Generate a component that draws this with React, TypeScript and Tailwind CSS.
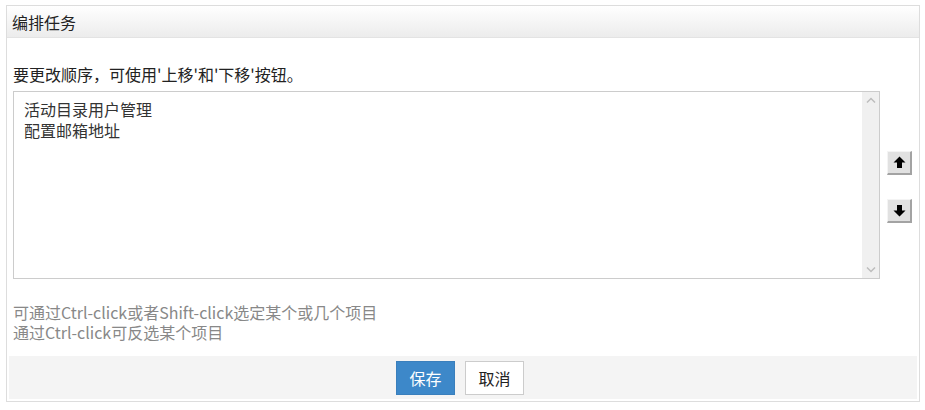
import React from "react";

const font = { fontFamily: '"Noto Sans CJK SC", "Liberation Sans", sans-serif' };

function ArrowButton({ dir }: { dir: "up" | "down" }) {
  return (
    <button className="w-[25px] h-[24px] flex items-center justify-center bg-[#e1e1e1] border border-t-[#f4f4f4] border-l-[#f4f4f4] border-r-2 border-b-2 border-r-[#a3a3a3] border-b-[#a3a3a3]">
      <svg width="13" height="13" viewBox="0 0 13 13" className={dir === "down" ? "rotate-180" : ""}>
        <path d="M6.5 0.5 L12.5 6.5 L9 6.5 L9 12 L4 12 L4 6.5 L0.5 6.5 Z" fill="#000" />
      </svg>
    </button>
  );
}

export default function App() {
  const tasks = ["活动目录用户管理", "配置邮箱地址"];

  return (
    <div className="w-[925px] h-[410px] bg-white pl-[6px] pt-[5px]" style={font}>
      <div className="w-[914px] h-[397px] border border-[#dddddd] flex flex-col">
        {/* Header */}
        <div className="h-[32px] shrink-0 border-b border-[#e3e3e3] bg-gradient-to-b from-white to-[#ececec] px-[5px] flex items-center text-[16px] text-[#222]">
          编排任务
        </div>

        {/* Body */}
        <div className="flex-1 px-[6px] pt-[26px]">
          <div className="text-[16px] leading-[20px] text-[#222] mb-[7px]">
            要更改顺序，可使用'上移'和'下移'按钮。
          </div>
          <div className="flex items-start gap-[7px]">
            <div className="w-[867px] h-[188px] border border-[#cccccc] flex">
              <div className="flex-1 pl-[10px] pt-[7px] text-[16px] leading-[21px] text-[#333]">
                {tasks.map((t) => (
                  <div key={t}>{t}</div>
                ))}
              </div>
              <div className="w-[17px] bg-[#f0f0f0] flex flex-col justify-between items-center py-[5px]">
                <svg width="10" height="6" viewBox="0 0 10 6">
                  <path d="M1 5.5 L5 1.5 L9 5.5" stroke="#bdbdbd" strokeWidth="1.5" fill="none" />
                </svg>
                <svg width="10" height="6" viewBox="0 0 10 6">
                  <path d="M1 0.5 L5 4.5 L9 0.5" stroke="#bdbdbd" strokeWidth="1.5" fill="none" />
                </svg>
              </div>
            </div>
            <div className="flex flex-col gap-[24px] pt-[60px]">
              <ArrowButton dir="up" />
              <ArrowButton dir="down" />
            </div>
          </div>
          <div className="mt-[23px] text-[16px] leading-[20px] text-[#888888]">
            <div>可通过Ctrl-click或者Shift-click选定某个或几个项目</div>
            <div>通过Ctrl-click可反选某个项目</div>
          </div>
        </div>

        {/* Footer */}
        <div className="mx-[2px] mb-[2px] h-[43px] shrink-0 bg-[#f4f4f4] flex items-center justify-center gap-[10px] pr-[6px]">
          <button className="w-[59px] h-[34px] bg-[#3d88c9] border border-[#3a7fbc] text-white text-[16px]">
            保存
          </button>
          <button className="w-[59px] h-[34px] bg-white border border-[#cccccc] text-[#222] text-[16px]">
            取消
          </button>
        </div>
      </div>
    </div>
  );
}
